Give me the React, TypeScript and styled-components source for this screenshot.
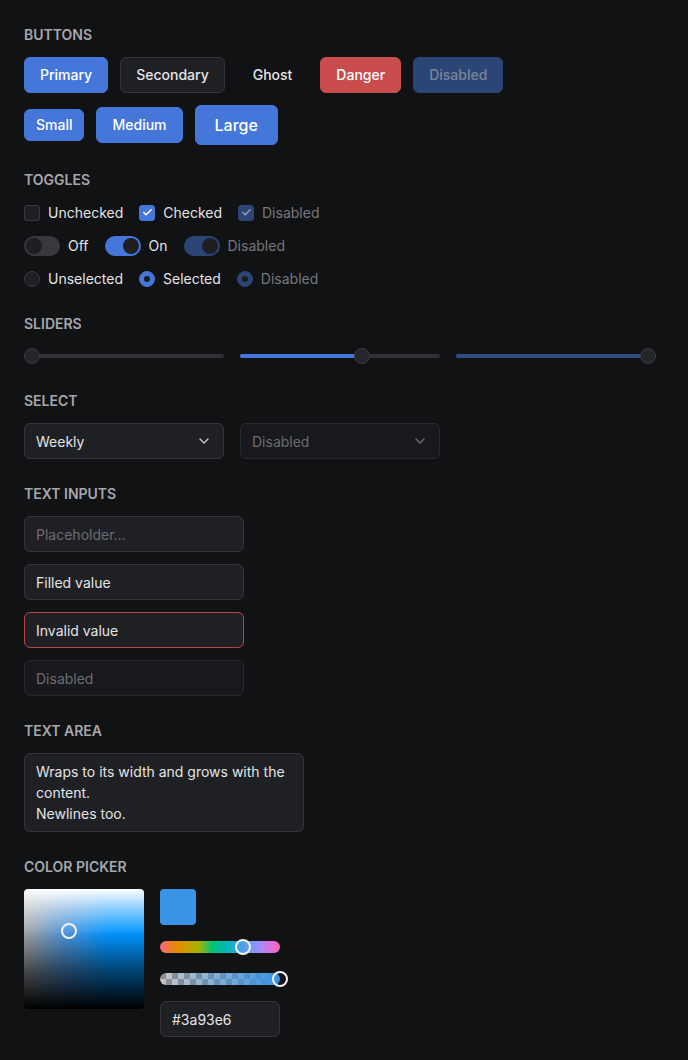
import React from "react";
import styled, { createGlobalStyle, css } from "styled-components";
import { Check, ChevronDown } from "lucide-react";

const Global = createGlobalStyle`
  html, body {
    margin: 0;
    background: #111214;
    color: #e4e4e7;
    font-family: Inter, "Noto Sans", sans-serif;
    font-size: 14px;
  }
  * { box-sizing: border-box; }
`;

const ScPage = styled.div`
  padding: 24px;
  display: flex;
  flex-direction: column;
  gap: 24px;
`;

const ScSection = styled.section`
  display: flex;
  flex-direction: column;
`;

const ScHeading = styled.h2`
  margin: 0 0 12px;
  font-size: 14px;
  line-height: 21px;
  font-weight: 600;
  color: #a6a7ad;
  text-transform: uppercase;
`;

const ScRow = styled.div<{ gap?: number }>`
  display: flex;
  align-items: center;
  gap: ${(p) => p.gap ?? 12}px;
`;

const ScStack = styled.div<{ gap?: number }>`
  display: flex;
  flex-direction: column;
  gap: ${(p) => p.gap ?? 12}px;
`;

type Variant = "primary" | "secondary" | "ghost" | "danger" | "disabled";
type Size = "sm" | "md" | "lg";

const variants = {
  primary: css`
    background: #4577db;
    color: #fff;
    border-color: #4577db;
  `,
  secondary: css`
    background: #1f2024;
    color: #e4e4e7;
    border-color: #34353a;
  `,
  ghost: css`
    background: transparent;
    color: #e4e4e7;
    border-color: transparent;
  `,
  danger: css`
    background: #c94d4d;
    color: #fff;
    border-color: #c94d4d;
  `,
  disabled: css`
    background: #2b4577;
    color: #7b8496;
    border-color: #2b4577;
  `,
};

const sizes = {
  sm: css`
    height: 32px;
    padding: 0 11px;
    font-size: 14px;
  `,
  md: css`
    height: 36px;
    padding: 0 15px;
    font-size: 14px;
  `,
  lg: css`
    height: 40px;
    padding: 0 19px;
    font-size: 16px;
  `,
};

const ScButton = styled.button<{ variant: Variant; size: Size }>`
  font-family: inherit;
  font-weight: 500;
  border: 1px solid;
  border-radius: 6px;
  line-height: 20px;
  padding-top: 1px;
  cursor: pointer;
  ${(p) => variants[p.variant]}
  ${(p) => sizes[p.size]}
`;

const ScOption = styled.label<{ disabled?: boolean }>`
  display: flex;
  align-items: center;
  gap: 8px;
  height: 21px;
  color: ${(p) => (p.disabled ? "#76777c" : "#e4e4e7")};
`;

const ScCheckbox = styled.span<{ checked?: boolean; disabled?: boolean }>`
  width: 16px;
  height: 16px;
  border-radius: 3px;
  display: flex;
  align-items: center;
  justify-content: center;
  border: 1px solid
    ${(p) => (p.checked ? (p.disabled ? "#2b4577" : "#4577db") : "#3a3b40")};
  background: ${(p) =>
    p.checked ? (p.disabled ? "#2b4577" : "#4577db") : "#1f2024"};
  color: ${(p) => (p.disabled ? "#9aa3b5" : "#fff")};
`;

const ScSwitch = styled.span<{ on?: boolean; disabled?: boolean }>`
  width: 36px;
  height: 20px;
  border-radius: 10px;
  padding: 2px;
  display: flex;
  justify-content: ${(p) => (p.on ? "flex-end" : "flex-start")};
  background: ${(p) => (p.on ? (p.disabled ? "#2b4577" : "#4577db") : "#38393e")};

  &::after {
    content: "";
    width: 16px;
    height: 16px;
    border-radius: 50%;
    background: #1e1f23;
  }
`;

const ScRadio = styled.span<{ checked?: boolean; disabled?: boolean }>`
  width: 16px;
  height: 16px;
  border-radius: 50%;
  display: flex;
  align-items: center;
  justify-content: center;
  border: 1px solid
    ${(p) => (p.checked ? (p.disabled ? "#2b4577" : "#4577db") : "#3a3b40")};
  background: ${(p) =>
    p.checked ? (p.disabled ? "#2b4577" : "#4577db") : "#1f2024"};

  &::after {
    content: "";
    display: ${(p) => (p.checked ? "block" : "none")};
    width: 6px;
    height: 6px;
    border-radius: 50%;
    background: #1a1b1f;
  }
`;

const ScSlider = styled.div`
  position: relative;
  width: 200px;
  height: 20px;
  display: flex;
  align-items: center;
`;

const ScTrack = styled.div`
  position: relative;
  width: 100%;
  height: 4px;
  border-radius: 2px;
  background: #303136;
`;

const ScFill = styled.div<{ disabled?: boolean }>`
  height: 100%;
  border-radius: 2px;
  background: ${(p) => (p.disabled ? "#2f4c82" : "#4577db")};
`;

const ScThumb = styled.div`
  position: absolute;
  top: 50%;
  width: 16px;
  height: 16px;
  margin: -8px 0 0 -8px;
  border-radius: 50%;
  background: #25262b;
  border: 1px solid #3a3b40;
`;

const Slider = ({ value, disabled }: { value: number; disabled?: boolean }) => (
  <ScSlider>
    <ScTrack>
      <ScFill disabled={disabled} style={{ width: `${value}%` }} />
      <ScThumb style={{ left: `calc(8px + ${value / 100} * (100% - 16px))` }} />
    </ScTrack>
  </ScSlider>
);

const ScSelect = styled.div<{ disabled?: boolean }>`
  width: 200px;
  height: 36px;
  padding: 0 11px;
  display: flex;
  align-items: center;
  justify-content: space-between;
  border-radius: 6px;
  border: 1px solid ${(p) => (p.disabled ? "#27282c" : "#34353a")};
  background: ${(p) => (p.disabled ? "#18191c" : "#1f2024")};
  color: ${(p) => (p.disabled ? "#6b6c71" : "#e4e4e7")};

  svg {
    color: ${(p) => (p.disabled ? "#6b6c71" : "#c9c9cd")};
  }
`;

const ScInput = styled.input<{ invalid?: boolean; w?: number }>`
  width: ${(p) => p.w ?? 220}px;
  height: 36px;
  padding: 0 11px;
  border-radius: 6px;
  border: 1px solid ${(p) => (p.invalid ? "#b94444" : "#34353a")};
  background: #1f2024;
  color: #e4e4e7;
  font-family: inherit;
  font-size: 14px;
  outline: none;

  &::placeholder {
    color: #6b6c71;
  }

  &:disabled {
    background: #18191c;
    border-color: #27282c;
    color: #6b6c71;
  }
`;

const ScTextArea = styled.textarea`
  width: 280px;
  padding: 7px 11px;
  border-radius: 6px;
  border: 1px solid #34353a;
  background: #1f2024;
  color: #e4e4e7;
  font-family: inherit;
  font-size: 14px;
  line-height: 21px;
  resize: none;
  overflow: hidden;
  outline: none;
  display: block;
`;

const ScPicker = styled.div`
  display: flex;
  gap: 16px;
  align-items: flex-start;
`;

const ScSquare = styled.div`
  position: relative;
  width: 120px;
  height: 120px;
  border-radius: 4px;
  background:
    linear-gradient(to bottom, rgba(0, 0, 0, 0) 36%, rgba(0, 0, 0, 0.55) 68%, #000 100%),
    linear-gradient(to bottom, #fff 0%, rgba(255, 255, 255, 0.55) 16%, rgba(255, 255, 255, 0) 38%),
    linear-gradient(to right, #a2a2a2, #4a93d8 35%, #0095ff 70%);
`;

const ScRing = styled.div`
  position: absolute;
  width: 16px;
  height: 16px;
  margin: -8px 0 0 -8px;
  border-radius: 50%;
  border: 2px solid #f2f2f4;
`;

const ScSwatch = styled.div<{ color: string }>`
  width: 36px;
  height: 36px;
  border-radius: 4px;
  background: ${(p) => p.color};
`;

const ScBar = styled.div<{ kind: "hue" | "alpha" }>`
  position: relative;
  width: 120px;
  height: 12px;
  border-radius: 6px;
  ${(p) =>
    p.kind === "hue"
      ? css`
          background: linear-gradient(
            to right,
            #f7667f 0%,
            #f07a3a 7%,
            #e68a00 14%,
            #a7b300 32%,
            #00c27a 44%,
            #00b9b0 54%,
            #2fa6e0 64%,
            #6c9cf5 74%,
            #a98bf7 84%,
            #e36ee0 93%,
            #f56aa8 100%
          );
        `
      : css`
          background:
            linear-gradient(to right, rgba(58, 147, 230, 0), #3a93e6),
            repeating-conic-gradient(#c6c6c6 0% 25%, #8f8f8f 0% 50%) 0 0 / 12px 12px;
        `}
`;

const ScBarThumb = styled.div`
  position: absolute;
  top: 50%;
  width: 16px;
  height: 16px;
  margin: -8px 0 0 -8px;
  border-radius: 50%;
  border: 2px solid #f2f2f4;
`;

export default function App() {
  const color = "#3a93e6";
  return (
    <>
      <Global />
      <ScPage>
        <ScSection>
          <ScHeading>Buttons</ScHeading>
          <ScStack>
            <ScRow>
              <ScButton variant="primary" size="md">Primary</ScButton>
              <ScButton variant="secondary" size="md">Secondary</ScButton>
              <ScButton variant="ghost" size="md">Ghost</ScButton>
              <ScButton variant="danger" size="md">Danger</ScButton>
              <ScButton variant="disabled" size="md">Disabled</ScButton>
            </ScRow>
            <ScRow>
              <ScButton variant="primary" size="sm">Small</ScButton>
              <ScButton variant="primary" size="md">Medium</ScButton>
              <ScButton variant="primary" size="lg">Large</ScButton>
            </ScRow>
          </ScStack>
        </ScSection>

        <ScSection>
          <ScHeading>Toggles</ScHeading>
          <ScStack>
            <ScRow gap={16}>
              <ScOption>
                <ScCheckbox />
                Unchecked
              </ScOption>
              <ScOption>
                <ScCheckbox checked>
                  <Check size={11} strokeWidth={3.2} />
                </ScCheckbox>
                Checked
              </ScOption>
              <ScOption disabled>
                <ScCheckbox checked disabled>
                  <Check size={11} strokeWidth={3.2} />
                </ScCheckbox>
                Disabled
              </ScOption>
            </ScRow>
            <ScRow gap={16}>
              <ScOption>
                <ScSwitch />
                Off
              </ScOption>
              <ScOption>
                <ScSwitch on />
                On
              </ScOption>
              <ScOption disabled>
                <ScSwitch on disabled />
                Disabled
              </ScOption>
            </ScRow>
            <ScRow gap={16}>
              <ScOption>
                <ScRadio />
                Unselected
              </ScOption>
              <ScOption>
                <ScRadio checked />
                Selected
              </ScOption>
              <ScOption disabled>
                <ScRadio checked disabled />
                Disabled
              </ScOption>
            </ScRow>
          </ScStack>
        </ScSection>

        <ScSection>
          <ScHeading>Sliders</ScHeading>
          <ScRow gap={16}>
            <Slider value={0} />
            <Slider value={62} />
            <Slider value={100} disabled />
          </ScRow>
        </ScSection>

        <ScSection>
          <ScHeading>Select</ScHeading>
          <ScRow gap={16}>
            <ScSelect>
              Weekly
              <ChevronDown size={16} strokeWidth={2} />
            </ScSelect>
            <ScSelect disabled>
              Disabled
              <ChevronDown size={16} strokeWidth={2} />
            </ScSelect>
          </ScRow>
        </ScSection>

        <ScSection>
          <ScHeading>Text Inputs</ScHeading>
          <ScStack>
            <ScInput placeholder="Placeholder..." />
            <ScInput defaultValue="Filled value" />
            <ScInput invalid defaultValue="Invalid value" />
            <ScInput disabled placeholder="Disabled" />
          </ScStack>
        </ScSection>

        <ScSection>
          <ScHeading>Text Area</ScHeading>
          <ScTextArea
            rows={3}
            readOnly
            defaultValue={"Wraps to its width and grows with the content.\nNewlines too."}
          />
        </ScSection>

        <ScSection>
          <ScHeading>Color Picker</ScHeading>
          <ScPicker>
            <ScSquare>
              <ScRing style={{ left: 45, top: 42 }} />
            </ScSquare>
            <ScStack gap={16}>
              <ScSwatch color={color} />
              <ScBar kind="hue">
                <ScBarThumb style={{ left: "69%" }} />
              </ScBar>
              <ScBar kind="alpha" style={{ marginTop: 4 }}>
                <ScBarThumb style={{ left: "100%" }} />
              </ScBar>
              <ScInput w={120} defaultValue={color} />
            </ScStack>
          </ScPicker>
        </ScSection>
      </ScPage>
    </>
  );
}
